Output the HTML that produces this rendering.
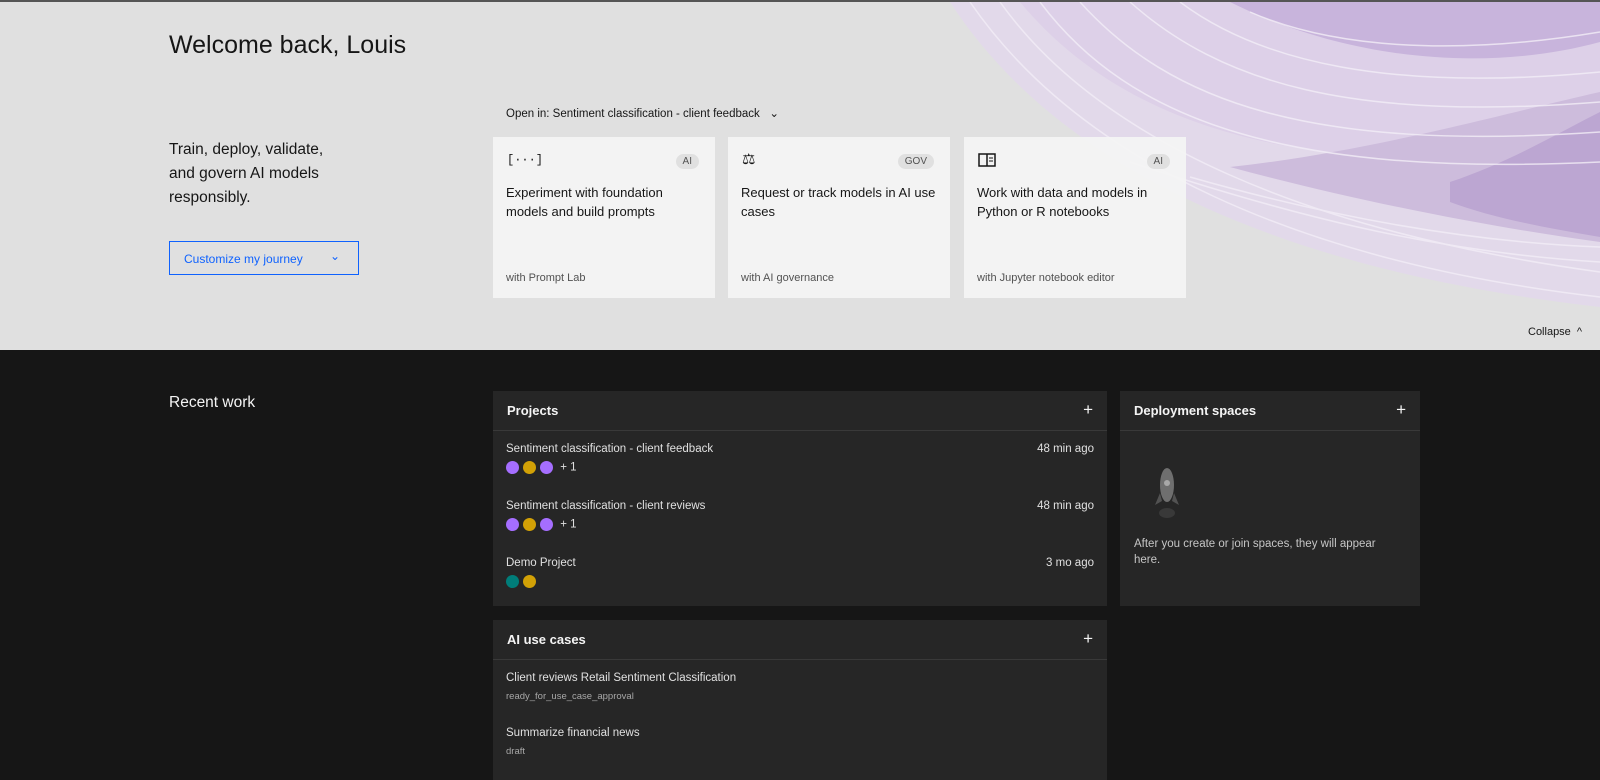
<!DOCTYPE html>
<html><head><meta charset="utf-8"><style>
*{box-sizing:border-box;margin:0;padding:0}
body{width:1600px;height:765px;overflow:hidden;background:#161616;font-family:"Liberation Sans",sans-serif;position:relative}
.top{position:absolute;left:0;top:0;width:1600px;height:350px;background:#e0e0e0;overflow:hidden;border-top:2px solid #555}
.abs{position:absolute}
.card{position:absolute;top:135px;width:222px;height:161px;background:rgba(244,244,244,0.93);padding:16px 14px}
.card .t{position:absolute;left:13px;top:46px;font-size:13px;line-height:19px;color:#161616;width:198px}
.card .s{position:absolute;left:13px;bottom:14px;font-size:11px;color:#525252}
.tag{position:absolute;right:16px;top:17px;font-size:10px;color:#525252;background:#e0e0e0;border-radius:9px;padding:2px 7px}
.panel{position:absolute;background:#262626}
.ph{height:40px;border-bottom:1px solid #393939;padding:12px 14px;font-size:13px;font-weight:bold;color:#f4f4f4;position:relative}
.ph span{position:absolute;right:14px;top:9px;font-weight:normal;font-size:17px}
.row{position:absolute;left:13px;right:13px;font-size:11.5px;color:#e0e0e0}
.row .r{position:absolute;right:0;top:0}
.av{display:inline-block;width:13px;height:13px;border-radius:50%;margin-right:4px;vertical-align:middle}
.p{background:#a56eff}.y{background:#d2a106}.g{background:#007d79}
</style></head><body>
<div class="top">
<svg class="abs" style="left:930px;top:0" width="670" height="350" viewBox="0 0 670 350">
<path d="M20 0 C 130 170, 360 270, 670 305 L670 0 Z" fill="#e2d9ea"/>
<path d="M90 0 C 190 120, 360 180, 670 150 L670 0 Z" fill="#ddd0e8"/>
<path d="M300 0 C 420 60, 560 70, 670 40 L670 0 Z" fill="#c8b4dc"/>
<path d="M300 165 C 440 150, 580 110, 670 90 L670 240 C 560 225, 430 200, 300 165 Z" fill="#cdbcdc"/>
<path d="M520 180 C 580 160, 630 130, 670 110 L670 235 C 610 225, 560 215, 520 200 Z" fill="#bca6d2"/>
<g fill="none" stroke="#f3eef7" stroke-width="1.5" opacity="0.8">
<path d="M40 0 C 150 160, 370 260, 670 295"/><path d="M70 0 C 170 140, 380 230, 670 270"/>
<path d="M110 0 C 200 120, 360 175, 670 160"/><path d="M150 0 C 240 100, 380 150, 670 130"/>
<path d="M200 0 C 290 80, 420 120, 670 100"/><path d="M250 0 C 330 60, 460 90, 670 70"/>
<path d="M320 10 C 400 45, 520 55, 670 30"/>
<path d="M200 160 C 350 210, 500 250, 670 260"/><path d="M260 175 C 400 215, 540 240, 670 245"/>
</g>
</svg>
<div class="abs" style="left:169px;top:29px;font-size:25px;color:#161616">Welcome back, Louis</div>
<div class="abs" style="left:169px;top:136px;font-size:15.5px;line-height:24px;color:#161616">Train, deploy, validate,<br>and govern AI models<br>responsibly.</div>
<div class="abs" style="left:169px;top:239px;width:190px;height:34px;border:1px solid #0f62fe;color:#0f62fe;font-size:12px;padding:10px 14px">Customize my journey<span style="position:absolute;right:18px;top:7px">⌄</span></div>
<div class="abs" style="left:506px;top:104px;font-size:11.5px;color:#161616">Open in: Sentiment classification - client feedback &nbsp;&nbsp;⌄</div>
<div class="card" style="left:493px"><div style="font-size:12px;color:#161616;font-family:'Liberation Mono'">[···]</div><div class="tag">AI</div><div class="t">Experiment with foundation models and build prompts</div><div class="s">with Prompt Lab</div></div>
<div class="card" style="left:728px"><div style="font-size:15px;color:#161616;margin-top:-3px">⚖</div><div class="tag">GOV</div><div class="t">Request or track models in AI use cases</div><div class="s">with AI governance</div></div>
<div class="card" style="left:964px"><svg width="18" height="14"><rect x="1" y="1" width="16" height="12" fill="none" stroke="#161616" stroke-width="1.5"/><line x1="9" y1="1" x2="9" y2="13" stroke="#161616" stroke-width="1.5"/><line x1="11" y1="5" x2="15" y2="5" stroke="#161616"/><line x1="11" y1="8" x2="15" y2="8" stroke="#161616"/></svg><div class="tag">AI</div><div class="t">Work with data and models in Python or R notebooks</div><div class="s">with Jupyter notebook editor</div></div>
<div class="abs" style="left:1528px;top:324px;font-size:11px;color:#161616">Collapse &nbsp;^</div>
</div>
<div class="abs" style="left:169px;top:394px;font-size:15.5px;color:#f4f4f4">Recent work</div>
<div class="panel" style="left:493px;top:391px;width:614px;height:215px">
<div class="ph">Projects<span>+</span></div>
<div class="row" style="top:52px">Sentiment classification - client feedback<span class="r">48 min ago</span><div style="margin-top:6px"><i class="av p"></i><i class="av y"></i><i class="av p"></i> + 1</div></div>
<div class="row" style="top:109px">Sentiment classification - client reviews<span class="r">48 min ago</span><div style="margin-top:6px"><i class="av p"></i><i class="av y"></i><i class="av p"></i> + 1</div></div>
<div class="row" style="top:166px">Demo Project<span class="r">3 mo ago</span><div style="margin-top:6px"><i class="av g"></i><i class="av y"></i></div></div>
</div>
<div class="panel" style="left:1120px;top:391px;width:300px;height:215px">
<div class="ph">Deployment spaces<span>+</span></div>
<svg class="abs" style="left:34px;top:72px" width="26" height="60"><ellipse cx="13" cy="22" rx="7" ry="17" fill="#6f6f6f"/><circle cx="13" cy="20" r="3" fill="#a8a8a8"/><path d="M6 30 L1 42 L8 38 Z M20 30 L25 42 L18 38 Z" fill="#525252"/><ellipse cx="13" cy="50" rx="8" ry="5" fill="#393939"/></svg>
<div class="abs" style="left:14px;top:145px;font-size:11.5px;line-height:16px;color:#c6c6c6;width:270px">After you create or join spaces, they will appear here.</div>
</div>
<div class="panel" style="left:493px;top:620px;width:614px;height:160px">
<div class="ph">AI use cases<span>+</span></div>
<div class="row" style="top:52px">Client reviews Retail Sentiment Classification<div style="margin-top:7px;font-size:9.5px;color:#a8a8a8">ready_for_use_case_approval</div></div>
<div class="row" style="top:107px">Summarize financial news<div style="margin-top:7px;font-size:9.5px;color:#a8a8a8">draft</div></div>
</div>
</body></html>
